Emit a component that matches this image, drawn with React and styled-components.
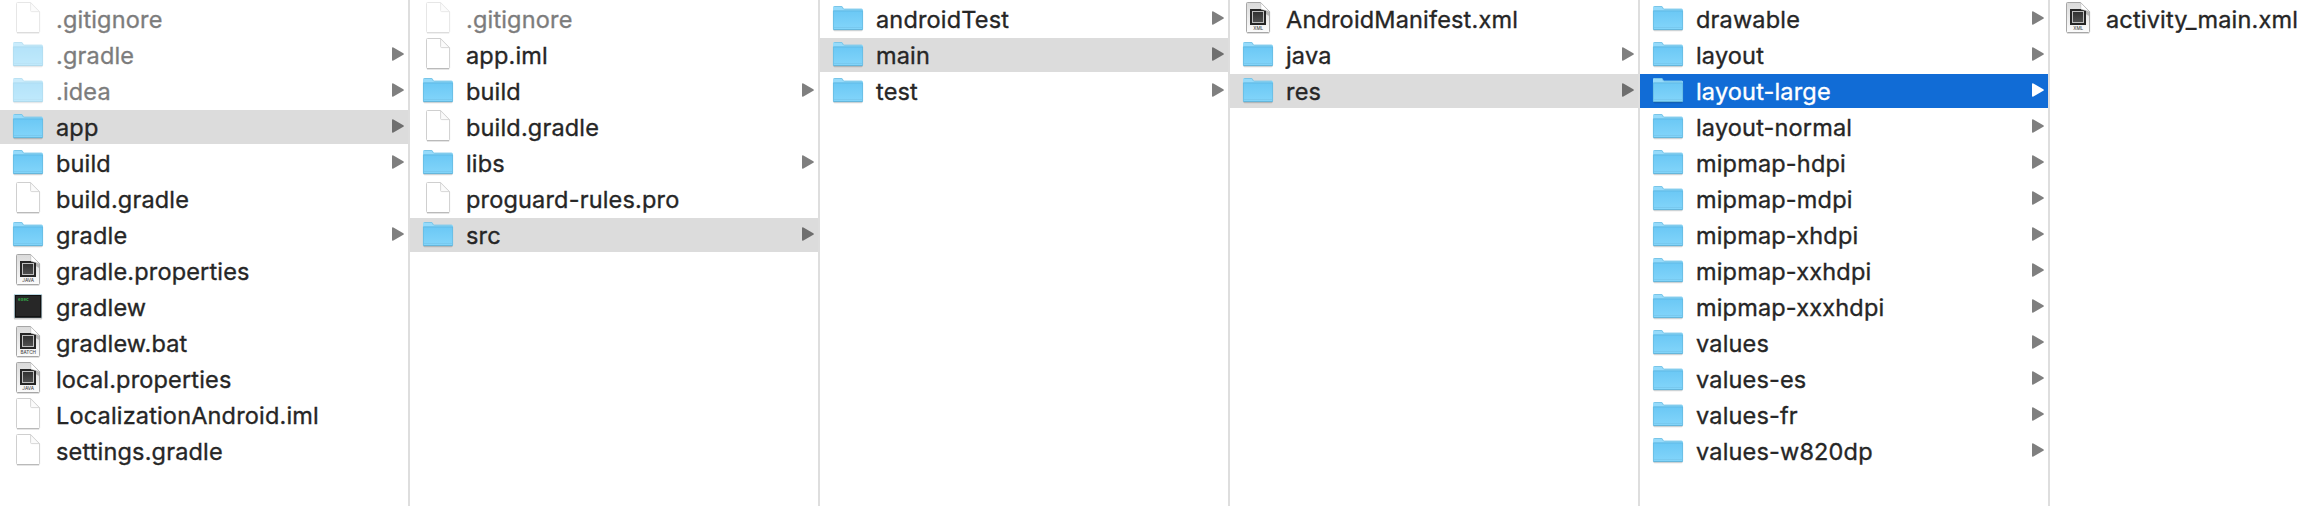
import React from "react";
import styled, { createGlobalStyle, css } from "styled-components";

const GlobalStyle = createGlobalStyle`
  body { margin: 0; background: #fff; }
`;

const Browser = styled.main`
  display: flex;
  width: 100%;
  height: 506px;
  overflow: hidden;
  background: #fff;
  font-family: Inter, "Liberation Sans", sans-serif;
  cursor: default;
`;

const Column = styled.ul`
  box-sizing: border-box;
  flex: 0 0 410px;
  display: flex;
  flex-direction: column;
  gap: 2px;
  margin: 0;
  padding: 2px 0 0;
  list-style: none;
  border-right: 2px solid #dedede;

  &:last-child {
    flex: 1 0 0;
    border-right: 0;
  }
`;

const rowTones = {
  plain: css`color: #262626; --arrow: #7f7f7f;`,
  path: css`color: #262626; background: #dcdcdc; --arrow: #6e6e6e;`,
  active: css`color: #fff; background: #116cd6; --arrow: #fff;`,
};

const Row = styled.li`
  flex: none;
  display: flex;
  align-items: center;
  height: 34px;
  ${({ $tone }) => rowTones[$tone]}
`;

const IconSlot = styled.svg`
  flex: none;
  width: 56px;
  height: 34px;
  opacity: ${({ $hidden }) => ($hidden ? 0.5 : 1)};
`;

const Name = styled.span`
  flex: 1;
  align-self: flex-start;
  font-size: 23.5px;
  line-height: 35px;
  letter-spacing: 0.17px;
  white-space: nowrap;
  -webkit-text-stroke: 0.35px currentColor;
  opacity: ${({ $hidden }) => ($hidden ? 0.6 : 1)};
`;

const Arrow = styled.svg`
  flex: none;
  width: 12px;
  height: 14px;
  margin: 0 4px 2px 0;
  fill: var(--arrow);
`;

const IconTag = styled.text`
  font: 500 4.6px Inter, sans-serif;
  fill: #505050;
  text-anchor: middle;
`;

const Prompt = styled.text`
  font: 700 4.5px "Liberation Mono", monospace;
  fill: #35b34b;
`;

const Defs = styled.svg`
  position: absolute;
  width: 0;
  height: 0;
`;

function IconDefs() {
  return (
    <Defs aria-hidden="true">
      <linearGradient id="folder" x1="0" y1="0" x2="0" y2="1">
        <stop offset="0" stopColor="#6bc8f5" />
        <stop offset="1" stopColor="#83d5fa" />
      </linearGradient>
      <linearGradient id="sheet" x1="0" y1="0" x2="0" y2="1">
        <stop offset="0" stopColor="#dadada" />
        <stop offset="1" stopColor="#fcfcfc" />
      </linearGradient>
      <linearGradient id="chip" x1="0" y1="0" x2="0" y2="1">
        <stop offset="0" stopColor="#303030" />
        <stop offset="1" stopColor="#505050" />
      </linearGradient>
    </Defs>
  );
}

function FolderArt() {
  return (
    <>
      <rect x="13.5" y="27" width="29" height="2.2" rx="1" fill="#000" opacity=".16" />
      <path d="M13 5.4q0-1.3 1.3-1.3h7.1q.8 0 1.2.7l.8 1.4q.3.6 1 .6h17.4q1.2 0 1.2 1.2V15H13z" fill="#96dbfb" />
      <path d="M14.3 4.5h7.1q.7 0 1 .6l.8 1.5q.3.6 1.1.6h17.5" fill="none" stroke="#72bfe2" strokeWidth=".8" />
      <path d="M13 8.8h30v18q0 1.2-1.2 1.2H14.2Q13 28 13 26.8z" fill="url(#folder)" />
      <path d="M13.5 8.9h29" stroke="#5bb5df" strokeWidth=".8" />
      <path d="M14 25.5h28" stroke="#72c3e8" strokeWidth=".6" />
      <path d="M13.3 27.6h29.4" stroke="#59a9ce" strokeWidth=".8" />
      <path d="M13.4 8.8v18.5M42.6 8.8v18.5" stroke="#64b9de" strokeWidth=".7" />
    </>
  );
}

function SheetArt() {
  return (
    <>
      <path d="M17 31.3h22.2" stroke="#000" strokeWidth="1" opacity=".12" />
      <path d="M17.5.5H30.6L39.6 9.6V29.5q0 1-1 1H17.5q-1 0-1-1v-28q0-1 1-1z" fill="#fff" stroke="#cfcfcf" strokeWidth="1" />
      <path d="M30.6.7V8.6q0 1 1 1h7.8z" fill="#fbfbfb" stroke="#d2d2d2" strokeWidth=".9" />
      <path d="M17 30.5h22" stroke="#b8b8b8" strokeWidth=".9" />
    </>
  );
}

function DocumentArt({ tag }) {
  return (
    <>
      <path d="M17 31.3h22.2" stroke="#000" strokeWidth="1" opacity=".15" />
      <path d="M17.5.5H30.6L39.6 9.6V29.5q0 1-1 1H17.5q-1 0-1-1v-28q0-1 1-1z" fill="url(#sheet)" stroke="#a6a6a6" strokeWidth="1" />
      <path d="M31 4l8 6v4l-8-5z" fill="#000" opacity=".2" />
      <rect x="20" y="7" width="16" height="16" fill="#262626" />
      <rect x="22.5" y="9.5" width="11" height="11" fill="url(#chip)" stroke="#c0c0c0" strokeWidth="1" />
      <path d="M30.8.8V6.4q0 .8.7 1l7.9 2.1z" fill="#fff" stroke="#b0b0b0" strokeWidth=".5" />
      <IconTag x="28.2" y="27.9">{tag}</IconTag>
    </>
  );
}

function TerminalArt() {
  return (
    <>
      <rect x="13.8" y="4.4" width="28.4" height="25" rx="1" fill="#000" opacity=".2" />
      <rect x="14" y="4" width="28" height="24" fill="#bcd8e2" />
      <rect x="14.8" y="5" width="26.6" height="22.8" fill="#101010" />
      <rect x="16" y="6" width="24" height="20.2" fill="#272727" />
      <Prompt x="18" y="11">exec</Prompt>
    </>
  );
}

function Icon({ kind, hidden }) {
  return (
    <IconSlot viewBox="0 0 56 34" $hidden={hidden} aria-hidden="true">
      {kind === "folder" && <FolderArt />}
      {kind === "file" && <SheetArt />}
      {kind === "exec" && <TerminalArt />}
      {["JAVA", "BATCH", "XML"].includes(kind) && <DocumentArt tag={kind} />}
    </IconSlot>
  );
}

const dir = (name, tone = "plain") => ({ name, kind: "folder", tone });
const file = (name, kind = "file") => ({ name, kind, tone: "plain" });

const columns = [
  [
    file(".gitignore"), dir(".gradle"), dir(".idea"), dir("app", "path"), dir("build"),
    file("build.gradle"), dir("gradle"), file("gradle.properties", "JAVA"),
    file("gradlew", "exec"), file("gradlew.bat", "BATCH"), file("local.properties", "JAVA"),
    file("LocalizationAndroid.iml"), file("settings.gradle"),
  ],
  [
    file(".gitignore"), file("app.iml"), dir("build"), file("build.gradle"), dir("libs"),
    file("proguard-rules.pro"), dir("src", "path"),
  ],
  [dir("androidTest"), dir("main", "path"), dir("test")],
  [file("AndroidManifest.xml", "XML"), dir("java"), dir("res", "path")],
  [
    dir("drawable"), dir("layout"), dir("layout-large", "active"), dir("layout-normal"),
    dir("mipmap-hdpi"), dir("mipmap-mdpi"), dir("mipmap-xhdpi"), dir("mipmap-xxhdpi"),
    dir("mipmap-xxxhdpi"), dir("values"), dir("values-es"), dir("values-fr"), dir("values-w820dp"),
  ],
  [file("activity_main.xml", "XML")],
];

function Entry({ name, kind, tone }) {
  const hidden = name.startsWith(".");
  return (
    <Row $tone={tone}>
      <Icon kind={kind} hidden={hidden} />
      <Name $hidden={hidden}>{name}</Name>
      {kind === "folder" && (
        <Arrow viewBox="0 0 12 14" aria-hidden="true">
          <path d="M0 1.2Q0-.3 1.4.4L11.3 6.2q1.2.8 0 1.6L1.4 13.6Q0 14.3 0 12.8z" />
        </Arrow>
      )}
    </Row>
  );
}

export default function App() {
  return (
    <>
      <GlobalStyle />
      <IconDefs />
      <Browser>
        {columns.map((entries, i) => (
          <Column key={i}>
            {entries.map((entry) => (
              <Entry key={entry.name} {...entry} />
            ))}
          </Column>
        ))}
      </Browser>
    </>
  );
}
